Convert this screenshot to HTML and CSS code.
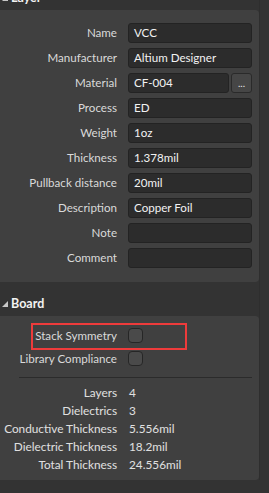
FILE: index.html
```html
<!DOCTYPE html>
<html lang="en">
<head>
    <meta charset="UTF-8">
    <meta name="viewport" content="width=device-width, initial-scale=1.0">
    <title>Layer Properties</title>
    <link rel="stylesheet" href="styles.css">
</head>
<body>
    <div class="props">
        <div class="section-head first">
            <svg class="caret" width="6" height="6" viewBox="0 0 6 6"><polygon points="6,0 6,6 0,6" fill="#c8c8c8"/></svg>
            <span>Layer</span>
        </div>
        <div class="panel layer-panel">
            <label class="field-label">Name</label>
            <div class="field">VCC</div>

            <label class="field-label">Manufacturer</label>
            <div class="field">Altium Designer</div>

            <label class="field-label">Material</label>
            <div class="field-group">
                <div class="field">CF-004</div>
                <button class="dots">...</button>
            </div>

            <label class="field-label">Process</label>
            <div class="field">ED</div>

            <label class="field-label">Weight</label>
            <div class="field">1oz</div>

            <label class="field-label">Thickness</label>
            <div class="field">1.378mil</div>

            <label class="field-label">Pullback distance</label>
            <div class="field">20mil</div>

            <label class="field-label">Description</label>
            <div class="field">Copper Foil</div>

            <label class="field-label">Note</label>
            <div class="field"></div>

            <label class="field-label">Comment</label>
            <div class="field"></div>
        </div>

        <div class="section-head">
            <svg class="caret" width="6" height="6" viewBox="0 0 6 6"><polygon points="6,0 6,6 0,6" fill="#c8c8c8"/></svg>
            <span>Board</span>
        </div>
        <div class="panel board-panel">
            <div class="checks">
                <label class="field-label">Stack Symmetry</label>
                <span class="checkbox"></span>

                <label class="field-label">Library Compliance</label>
                <span class="checkbox"></span>
            </div>
            <div class="highlight"></div>

            <div class="divider"></div>

            <div class="summary">
                <span class="sum-label">Layers</span>
                <span class="sum-value">4</span>

                <span class="sum-label">Dielectrics</span>
                <span class="sum-value">3</span>

                <span class="sum-label">Conductive Thickness</span>
                <span class="sum-value">5.556mil</span>

                <span class="sum-label">Dielectric Thickness</span>
                <span class="sum-value">18.2mil</span>

                <span class="sum-label">Total Thickness</span>
                <span class="sum-value">24.556mil</span>
            </div>
        </div>
    </div>
</body>
</html>
```

FILE: styles.css
```css
html, body {
    margin: 0;
    background-color: #333333;
    height: 100%;
    overflow: hidden;
}

body {
    font-family: Lato, "Noto Sans", sans-serif;
    font-size: 11.6px;
    color: #dadada;
}

.props {
    width: 259px;
    border-right: 1px solid #2e2e2e;
}

.section-head {
    height: 34px;
    display: flex;
    align-items: flex-end;
    gap: 3px;
    padding-left: 2px;
    padding-bottom: 5px;
    box-sizing: border-box;
    font-size: 12.5px;
    font-weight: 700;
    color: #f2f2f2;
}

.section-head.first {
    margin-top: -24px;
}

.caret {
    margin-bottom: 4px;
}

.panel {
    background-color: #404040;
    border-radius: 0 4px 4px 0;
}

.layer-panel {
    display: grid;
    grid-template-columns: 117px 124px;
    column-gap: 11px;
    row-gap: 5px;
    padding: 13px 0 14px 0;
}

.field-label {
    text-align: right;
    line-height: 20px;
    white-space: nowrap;
}

.field {
    height: 20px;
    box-sizing: border-box;
    background-color: #2c2c2c;
    border: 1px solid #232323;
    border-radius: 3px;
    padding-left: 5px;
    line-height: 18px;
    color: #f2f2f2;
}

.field-group {
    display: flex;
    gap: 2px;
}

.field-group .field {
    flex: 1;
}

.dots {
    width: 21px;
    height: 20px;
    padding: 0 0 4px 0;
    background-color: #464646;
    border: 1px solid #2a2a2a;
    border-radius: 3px;
    color: #e8e8e8;
    font-family: inherit;
    font-size: 10px;
    line-height: 10px;
    display: flex;
    align-items: flex-end;
    justify-content: center;
}

.board-panel {
    position: relative;
    padding: 8px 7px 6px 0;
}

.checks {
    display: grid;
    grid-template-columns: 117px 15px;
    column-gap: 11px;
    grid-auto-rows: 23px;
    align-items: center;
}

.checks .field-label {
    line-height: 23px;
}

.checkbox {
    width: 15px;
    height: 15px;
    box-sizing: border-box;
    background-color: #4a4a4a;
    border: 1px solid #262626;
    border-radius: 4px;
}

.highlight {
    position: absolute;
    left: 31px;
    top: 7px;
    width: 152px;
    height: 23px;
    border: 2px solid #ee3b3b;
}

.divider {
    height: 1px;
    background-color: #2b2b2b;
    margin: 7px 0 6px 19px;
}

.summary {
    display: grid;
    grid-template-columns: 117px auto;
    column-gap: 12px;
    grid-auto-rows: 18px;
    line-height: 18px;
    font-size: 11.8px;
    color: #e0e0e0;
}

.sum-label {
    text-align: right;
    white-space: nowrap;
}
```
